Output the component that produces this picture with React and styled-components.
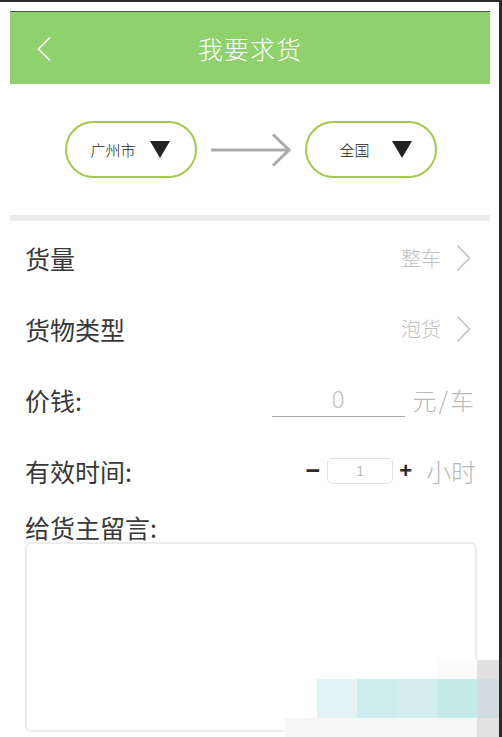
import React from "react";
import styled, { createGlobalStyle } from "styled-components";

const Global = createGlobalStyle`
  html, body { margin: 0; padding: 0; background: #ffffff; }
  body { font-family: "Noto Sans CJK SC", "Noto Sans", sans-serif; }
  * { box-sizing: border-box; }
`;

const Frame = styled.div`
  position: relative;
  width: 502px;
  height: 737px;
  overflow: hidden;
  background: #fff;
  border-top: 2px solid #2b2b2b;
  border-right: 3px solid #2b2b2b;
  padding: 0 9px 0 10px;
  display: flex;
  flex-direction: column;
`;

const Header = styled.header`
  margin-top: 9px;
  height: 73px;
  background: #8ed16d;
  border-top: 1px solid #4a5a40;
  display: flex;
  align-items: center;
  justify-content: center;
  position: relative;
  color: #fff;
`;

const BackBtn = styled.button`
  position: absolute;
  left: 26px;
  top: 24px;
  border: 0;
  background: none;
  padding: 0;
  display: flex;
`;

const Title = styled.h1`
  margin: 0;
  font-size: 25px;
  font-weight: 300;
  letter-spacing: 1px;
  color: #ffffff;
`;

const Route = styled.div`
  height: 131px;
  display: flex;
  align-items: center;
  justify-content: center;
  gap: 14px;
  padding-left: 1px;
`;

const Pill = styled.div`
  width: 132px;
  height: 57px;
  border: 2.5px solid #a6c84f;
  border-radius: 30px;
  display: flex;
  align-items: center;
  padding-left: ${(p) => p.$pl}px;
  gap: ${(p) => p.$gap}px;
  font-size: 15px;
  font-weight: 300;
  color: #222;
`;

const Separator = styled.div`
  height: 6px;
  background: #ececec;
`;

const List = styled.div`
  padding: 1px 14px 0 15px;
  display: flex;
  flex-direction: column;
`;

const Row = styled.div`
  height: 71px;
  display: flex;
  align-items: center;
  justify-content: space-between;
`;

const Label = styled.span`
  font-size: 25px;
  color: #383838;
  font-weight: 400;
`;

const Value = styled.div`
  display: flex;
  align-items: center;
  gap: ${(p) => p.$gap || 0}px;
  margin-right: ${(p) => p.$mr || 0}px;
  color: #bfbfbf;
  font-size: ${(p) => p.$size || 20}px;
  font-weight: 300;
`;

const PriceInput = styled.div`
  width: 133px;
  height: 32px;
  border-bottom: 1px solid #a8a8a8;
  display: flex;
  align-items: center;
  justify-content: center;
  font-family: "Roboto", "Noto Sans", sans-serif;
  font-size: 23px;
  font-weight: 300;
  color: #c0c0c0;
  margin-top: 2px;
`;

const StepBtn = styled.span`
  font-family: "Liberation Sans", sans-serif;
  font-size: ${(p) => p.$size}px;
  font-weight: 700;
  color: #2b2b2b;
  line-height: 1;
  margin: 0 ${(p) => p.$mx}px;
`;

const StepBox = styled.div`
  width: 66px;
  height: 26px;
  border: 1px solid #e2e2e2;
  border-radius: 5px;
  display: flex;
  align-items: center;
  justify-content: center;
  font-family: "Liberation Sans", sans-serif;
  font-size: 14px;
  color: #b8b8b8;
`;

const Unit = styled.span`
  color: #b9b9b9;
  font-size: ${(p) => p.$size}px;
  font-weight: 300;
  letter-spacing: ${(p) => p.$ls || 0}px;
  margin-left: ${(p) => p.$ml || 0}px;
`;

const MsgLabel = styled.div`
  height: 30px;
  margin-top: 6px;
  display: flex;
  align-items: center;
  font-size: 25px;
  font-weight: 400;
  color: #383838;
`;

const MsgBox = styled.div`
  height: 190px;
  width: 452px;
  border: 2px solid #ececec;
  border-radius: 6px;
`;

const Watermark = styled.div`
  position: absolute;
  right: 0;
  bottom: 0;
  width: 214px;
  height: 77px;
  display: grid;
  grid-template-columns: 32px 40px 40px 40px 40px 22px;
  grid-template-rows: 19px 39px 19px;
  pointer-events: none;
`;

const Cell = styled.div`
  background: ${(p) => p.$c};
`;

const Chevron = () => (
  <svg width="15" height="28" viewBox="0 0 15 28">
    <polyline points="1.5,1.5 13.5,14 1.5,26.5" fill="none" stroke="#c2c2c2" strokeWidth="1.6" />
  </svg>
);

const Triangle = () => (
  <svg width="20" height="17" viewBox="0 0 20 17">
    <polygon points="0,0 20,0 10,17" fill="#222" />
  </svg>
);

const wm = [
  "transparent", "transparent", "transparent", "transparent", "#fcfcfc", "#e0e0e0",
  "transparent", "#e3f2f2", "#cdeced", "#d3eded", "#c4eaea", "#d0dcdd",
  "#f6f6f6", "#f7f7f7", "#f7f7f7", "#f7f7f7", "#f7f7f7", "#e2e2e2",
];

export default function App() {
  return (
    <>
      <Global />
      <Frame>
        <Header>
          <BackBtn aria-label="back">
            <svg width="16" height="26" viewBox="0 0 16 26">
              <polyline points="14,1.5 2.5,13 14,24.5" fill="none" stroke="#fff" strokeWidth="1.6" />
            </svg>
          </BackBtn>
          <Title>我要求货</Title>
        </Header>

        <Route>
          <Pill $pl={24} $gap={14}>
            <span>广州市</span>
            <Triangle />
          </Pill>
          <svg width="80" height="34" viewBox="0 0 80 34">
            <line x1="0" y1="17" x2="79" y2="17" stroke="#ababab" strokeWidth="3" />
            <polyline points="62,1.5 78,17 62,32.5" fill="none" stroke="#ababab" strokeWidth="3" />
          </svg>
          <Pill $pl={33} $gap={22}>
            <span>全国</span>
            <Triangle />
          </Pill>
        </Route>

        <Separator />

        <List>
          <Row>
            <Label>货量</Label>
            <Value $gap={15} $mr={5}>
              <span>整车</span>
              <Chevron />
            </Value>
          </Row>
          <Row>
            <Label>货物类型</Label>
            <Value $gap={15} $mr={5}>
              <span>泡货</span>
              <Chevron />
            </Value>
          </Row>
          <Row>
            <Label>价钱:</Label>
            <Value>
              <PriceInput>0</PriceInput>
              <Unit $size={24} $ml={8} $ls={2}>元/车</Unit>
            </Value>
          </Row>
          <Row>
            <Label>有效时间:</Label>
            <Value>
              <StepBtn $size={25} $mx={7}>−</StepBtn>
              <StepBox>1</StepBox>
              <StepBtn $size={22} $mx={6}>+</StepBtn>
              <Unit $size={25} $ml={8}>小时</Unit>
            </Value>
          </Row>
          <MsgLabel>给货主留言:</MsgLabel>
          <MsgBox />
        </List>

        <Watermark>
          {wm.map((c, i) => (
            <Cell key={i} $c={c} />
          ))}
        </Watermark>
      </Frame>
    </>
  );
}
